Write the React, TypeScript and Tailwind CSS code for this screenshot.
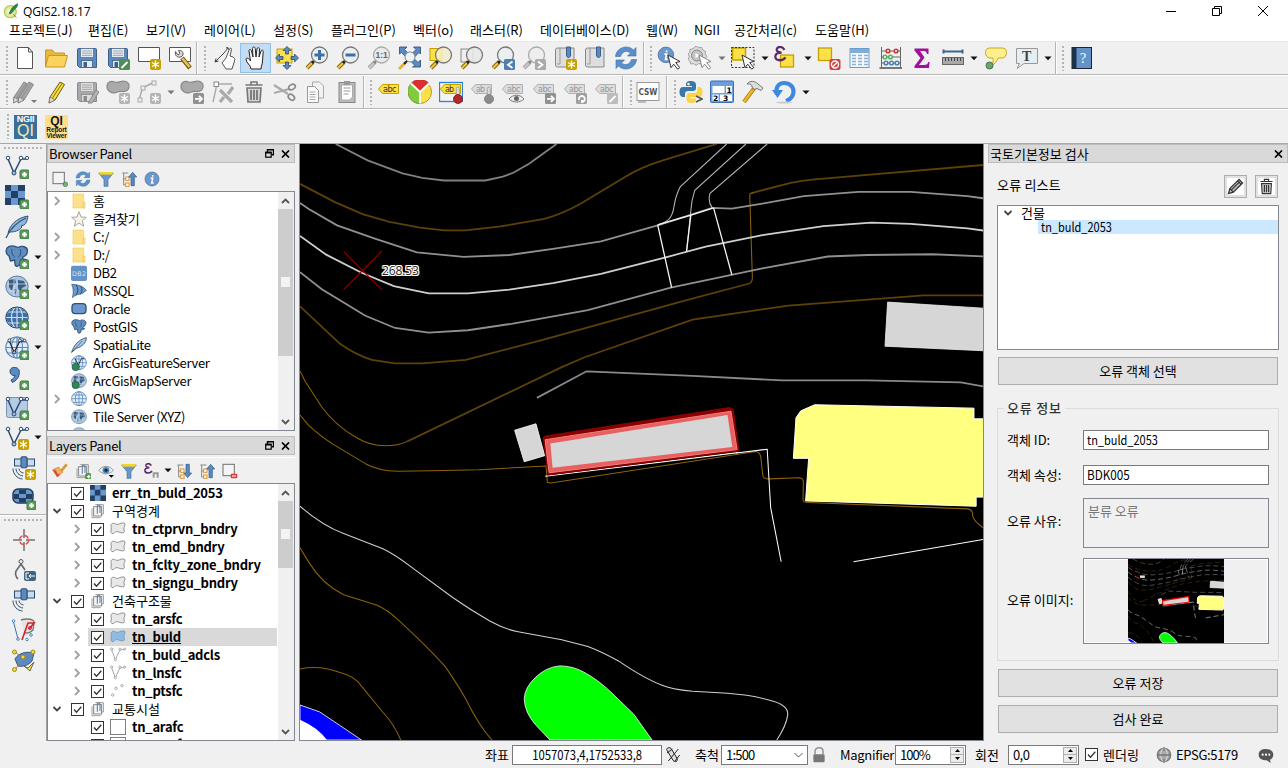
import React from "react";
import type { ReactNode } from "react";

/* ---------- icon primitives ---------- */

function Ico({ children, size = 24, box = 24 }: { children: ReactNode; size?: number; box?: number }) {
  return (
    <svg width={size} height={size} viewBox={`0 0 ${box} ${box}`} fill="none" className="block shrink-0">
      {children}
    </svg>
  );
}

const BLUE = "#5a8ac0";
const NAVY = "#2b4a6f";

const Plus = () => (
  <g>
    <rect x="15" y="15" width="9" height="9" rx="1.5" fill="#5a9a5a" stroke="#3f7a42" />
    <path d="M19.5 17v5M17 19.5h5" stroke="#fff" strokeWidth="2" />
  </g>
);
const Star = ({ c = "#c8a000" }: { c?: string }) => (
  <g>
    <rect x="13" y="13" width="11" height="11" rx="2" fill={c} />
    <path d="M18.500 14.500v8M15 16.500l7 4M22 16.500l-7 4" stroke="#fff" strokeWidth="1.400" />
  </g>
);
const Badge = ({ d, c = "#8c8c8c" }: { d: string; c?: string }) => (
  <g>
    <rect x="13" y="13" width="11" height="11" rx="1.500" fill={c} />
    <path d={d} stroke="#fff" strokeWidth="1.8" />
  </g>
);
const ARROW = "M15 18.8h7M19 15.8l3 3-3 3";
const Cursor = ({ c = "#333" }: { c?: string }) => (
  <path d="M11 9l12 6.5-4.3 1.1 4 5-2 1.6-4-5-2.7 3.5z" fill="#fff" stroke={c} />
);
const Lens = ({ grey = false, children, fill = "#e9eef0" }: { grey?: boolean; children?: ReactNode; fill?: string }) => (
  <g>
    <path d="M2 22l6-6" stroke={grey ? "#a8a8a8" : "#8a6a10"} strokeWidth="4" />
    <path d="M2 22l5-5" stroke={grey ? "#c9c9c9" : "#f5c53a"} strokeWidth="2" />
    <path d="M7 17l3-3" stroke={grey ? "#888" : "#222"} strokeWidth="2.5" />
    <circle cx="14.5" cy="9" r="8" fill={fill} fillOpacity=".85" stroke={grey ? "#aaa" : "#777"} strokeWidth="1.3" />
    {children}
  </g>
);
const Floppy = ({ a = "#5a8ac0", b = "#3e5f86", l = "#e4eaf0" }: { a?: string; b?: string; l?: string }) => (
  <g>
    <path d="M2.5 3.5a1 1 0 011-1h17a1 1 0 011 1v18h-17l-2-2z" fill={a} stroke={b} />
    <rect x="5.5" y="2.5" width="13" height="9" fill={l} stroke={b} strokeWidth=".6" />
    <path d="M7 5h10M7 7.2h10M7 9.4h10" stroke="#999" strokeWidth=".8" />
    <rect x="6.5" y="14.5" width="11" height="7" fill={l} stroke={b} strokeWidth=".8" />
    <rect x="8.5" y="16" width="3.5" height="5" fill={b} />
  </g>
);
const Blob = ({ f = "#c4c4c4", s = "#8f8f8f" }: { f?: string; s?: string }) => (
  <path d="M1 6.500C1 2 5 .5 8.500 2s5-.8 9-.8 6 2.300 5.500 5.800-3 5-7 4.500-4 .8-7 1.300S1 11.500 1 6.500z" fill={f} stroke={s} strokeWidth="1.2" />
);
const TagShape = ({ grey = false, text = "abc" }: { grey?: boolean; text?: string }) => (
  <g>
    <path d="M1.500 9L5.500 4.500h16v9h-16z" fill={grey ? "#dcdcdc" : "#fbe04a"} stroke={grey ? "#b0b0b0" : "#c4a000"} strokeLinejoin="round" />
    <text x="6" y="12" fontSize="8" fontFamily="DejaVu Sans, sans-serif" fill={grey ? "#999" : "#333"} textLength={text.length > 2 ? 13.5 : 9}>{text}</text>
  </g>
);
const Pin = ({ c, d }: { c: string; d: string }) => (
  <g>
    <path d="M17.300 16V8.500a1.500 1.500 0 013 0V16" fill="#ddd" stroke="#999" strokeWidth=".8" />
    <circle cx="19" cy="19" r="4.500" fill={c} stroke={d} strokeWidth=".8" />
  </g>
);
const VNodes = ({ c = NAVY }: { c?: string }) => (
  <g stroke={c}>
    <path d="M3 4l6 14L16 4h5" stroke={c} strokeWidth="1.5" />
    <circle cx="3" cy="3" r="1.800" fill="#fff" />
    <circle cx="16" cy="3" r="1.800" fill="#fff" />
    <circle cx="22" cy="3" r="1.600" fill="#fff" />
    <circle cx="9" cy="18" r="2" fill="#9dbede" />
  </g>
);
const Globe = ({ f = "#e3edf7", s = "#5a8ac0" }: { f?: string; s?: string }) => (
  <g stroke={s} strokeWidth="1.200">
    <ellipse cx="12" cy="11.500" rx="11.200" ry="10.500" fill={f} />
    <ellipse cx="12" cy="11.500" rx="5.500" ry="10.500" />
    <path d="M12 1v21M1 11.500h22M3 6h18M3 17h18" />
  </g>
);
const Land = () => (
  <g>
    <ellipse cx="12" cy="11.500" rx="11.200" ry="10.500" fill="#a9c4e0" stroke="#5f7f9f" />
    <path d="M4 5l6-1 1 4-3 3-1 5-3-4zM13 5l6 1 2 5-4 2-2 5-2-5zM9 14l3 1-2 5z" fill="#3b5c80" />
    <path d="M2 9h20M4 16h16M9 2v19" stroke="#dce8f3" strokeWidth=".7" />
  </g>
);
const Elephant = () => (
  <g>
    <path d="M2 3c3-3 8-2 11-.5 4-2 9-1 9.500 3 0 4-3 6-4.500 6.500l-.5 2 3 .5-3 1.500-2-1-.5 4c-1 3-5 3-5 0l-.5-4-4 1-1.500-5C1 9 .5 6 2 3z" fill="#5f8dbf" stroke="#2e4f78" strokeWidth="1.300" />
    <path d="M7 4c-1 4 1 7 3 8M15 4c2 4 0 7-2 8" stroke="#2e4f78" />
  </g>
);
const Feather = () => (
  <g>
    <path d="M3 19C4 11 11 3 23 1c-1 4-1 7-4 9l-3 1 1 1c-3 4-8 5-12 5z" fill="#8fb4da" stroke="#33557c" />
    <path d="M1 23C5 14 12 7 21 3" stroke="#33557c" strokeWidth="1.300" />
  </g>
);
const Checker = () => (
  <g>
    <rect width="20" height="20" fill="#6b98cc" />
    <path d="M0 0h6v6H0zM13 0h7v6h-7zM6 6h7v7H6zM0 13h6v7H0zM13 13h7v7h-7z" fill="#223f66" />
  </g>
);
const Refresh = () => (
  <g fill="#5a8fcc" stroke="#3c6ea8" strokeWidth=".6">
    <path d="M1.500 10.500C2 4.500 7 1 12 1c3 0 5.500 1 7.500 3L22 1.500V10h-8.500l3-3c-3-2.500-8-2.500-10 3.500z" />
    <path d="M22.500 13.500C22 19.500 17 23 12 23c-3 0-5.500-1-7.500-3L2 22.500V14h8.500l-3 3c3 2.500 8 2.500 10-3.500z" />
  </g>
);
const Funnel = () => (
  <g>
    <path d="M1 3h22l-8 10v10h-6V13z" fill="#6b98cc" stroke="#456f9f" />
    <path d="M2 3.500h20" stroke="#f4d62b" strokeWidth="4" />
  </g>
);
const Info = () => (
  <g>
    <circle cx="12" cy="12" r="10.500" fill="#6b98cc" stroke="#44699a" />
    <path d="M13 6v2.500M10 11h3l-1.500 7h3" stroke="#fff" strokeWidth="2.200" />
  </g>
);
const TreeArrow = ({ up = true }: { up?: boolean }) => (
  <g>
    <path d="M2 3h9M4 3v18h5M4 12h5" stroke="#888" strokeWidth="1.500" />
    <rect x="7" y="9" width="5" height="5" fill="#fff" stroke="#e0902a" strokeWidth="1.500" />
    <rect x="7" y="18" width="5" height="5" fill="#fff" stroke="#e0902a" strokeWidth="1.500" />
    <path d={up ? "M17.500 2l6 7h-3.500v13h-5V9h-3.500z" : "M17.500 22l6-7h-3.500V2h-5v13h-3.500z"} fill="#5a8ac0" stroke="#2e5484" />
  </g>
);
const Epsilon = ({ c = "#5a2a6a" }: { c?: string }) => (
  <path d="M11 4C8-1 2 1 3 4.500 3.500 6 5 6.800 8 7 3 7 1 9 1.500 12c.8 4 8 4 10.500 0" stroke={c} strokeWidth="2.400" />
);
const Satellite = () => (
  <g>
    <rect x="2.500" y="3" width="7" height="7" fill="#c6dbef" stroke={NAVY} />
    <rect x="15" y="3" width="7.500" height="7" fill="#c6dbef" stroke={NAVY} />
    <rect x="9" y=".8" width="6" height="11" rx="1" fill="#5a8ac0" stroke={NAVY} />
    <path d="M4 12.500c0 4 3 7 7 7.500M7 12.500c0 2.500 2 4 4.500 4.500M1 12.500c0 5.500 4 10 9.500 10.500" stroke={NAVY} />
  </g>
);
const Pencil = ({ f = "#f5dc3c", s = "#6b5a10" }: { f?: string; s?: string }) => (
  <g>
    <path d="M6 17L16 2l4.500 2.500L11 20l-6 3z" fill={f} stroke={s} />
    <path d="M8.500 18L18 3.500" stroke={s} strokeWidth=".8" />
    <path d="M6 17l-1 6 6-3z" fill="#ddd" stroke="#777" strokeWidth=".8" />
  </g>
);
const TrashCan = ({ c = "#777" }: { c?: string }) => (
  <g stroke={c} strokeWidth="1.600">
    <path d="M3.500 5h17M9 4.500V2h6v2.500" />
    <path d="M5 8h14l-1 14H6z" fill="#d5d5d5" />
    <path d="M9 10v10M12 10v10M15 10v10" strokeWidth="1.800" />
  </g>
);
const Page = () => <path d="M4.500 1.500h11l4 4.500v16.500h-15zM15.500 1.500V6h4" fill="#fff" stroke="#555" />;
const Composer = () => <path d="M1.500 1.500h21v14h-21z" fill="#fff" stroke="#555" />;
const Book = () => (
  <g>
    <path d="M2.500 4a2 2 0 012-2H21v19H4.500a2 2 0 01-2-2z" fill="#dedede" stroke="#888" />
    <path d="M7 2v16H4" stroke="#999" />
    <path d="M13.500 1h4v9l-2 2-2-2z" fill="#5a8ac0" stroke="#3c5f8a" />
  </g>
);

/* ---------- toolbar pieces ---------- */

function Handle() {
  return (
    <div className="flex w-[13px] shrink-0 justify-center">
      <div className="h-[25px] w-[2px] bg-[repeating-linear-gradient(to_bottom,#b4b4b4_0px,#b4b4b4_2px,transparent_2px,transparent_4px)]" />
    </div>
  );
}
function Sep() {
  return <div className="h-full w-[2px] shrink-0 border-r border-white bg-[#b4b4b4]" />;
}
function B({ children, on = false }: { children: ReactNode; on?: boolean }) {
  return (
    <div className={on ? "flex h-[30px] w-[30.9px] shrink-0 items-center justify-center border border-[#90c0ea] bg-[#c3dcf2]" : "flex h-[30px] w-[30.9px] shrink-0 items-center justify-center"}>
      <Ico>{children}</Ico>
    </div>
  );
}
function Drop({ grey = false }: { grey?: boolean }) {
  return (
    <div className="flex w-[12.2px] shrink-0 justify-center">
      <svg width="8" height="5" viewBox="0 0 8 5"><path d="M.5 .5h7L4 4.300z" fill={grey ? "#777" : "#111"} /></svg>
    </div>
  );
}

function RowOne() {
  return (
    <div className="flex h-[34px] items-center border-b border-[#b8b8b8] border-t border-t-[#e8e8e8]">
      <div className="-mr-[3px]"><Handle /></div>
      <B><Page /></B>
      <B>
        <path d="M1.500 21V4h7l2 3h10v3" fill="#e8b93a" stroke="#c9962a" />
        <path d="M1.500 21L4.500 9.500h19L20.500 21z" fill="#fbd35c" stroke="#c9962a" />
      </B>
      <B><Floppy /></B>
      <B>
        <Floppy />
        <Badge c="#4e8f57" d="M15.500 22l6-6" />
      </B>
      <B><Composer /><Star /></B>
      <B>
        <Composer />
        <path d="M14 12l8 10" stroke="#7a5a10" strokeWidth="4.500" />
        <path d="M14.500 12.500l7 8.500" stroke="#e8c35a" strokeWidth="2.500" />
        <path d="M7.500 5.500c-1 4 2 6.500 5.500 5.500l2-2c.5-3-1.500-5-4.500-4.500l1.500 3-2 1.500z" fill="#ddd" stroke="#555" />
      </B>
      <div className="ml-px h-full"><Sep /></div>
      <div className="-mr-[2px]"><Handle /></div>
      <B>
        <path d="M9 17l4-5 3.500-9c.6-1.500 2.300-1 2 .6L17 10l3 1c1.500 1 2 2 1.500 4L19 23h-6z" fill="#fff" stroke="#555" />
        <path d="M2 16L11 7M2 16l1-3.500M2 16l3.500-1M11 7l4-5M13 2l2-.5.5 2" stroke="#444" />
      </B>
      <B on>
        <path d="M7 23c0-4-5-6-5-10 1-2 3-.5 4.500 2L5 5c0-2 2-2 2.500 0L9 11 8.500 2.500c0-2 2.500-2 2.700 0L12 11l1-8c.2-2 2.500-1.500 2.500 0L15 11l2-6c.8-1.500 2.500-1 2.200.8L18.500 15c0 3-1.500 5-1.500 8z" fill="#fff" stroke="#222" />
      </B>
      <B>
        <rect x="2" y="3" width="15" height="14" fill="#fbe04a" stroke="#c4a000" />
        <path d="M12 .5l4 4h-2.500v3.500h-3V4.500H8zM12 23.500l4-4h-2.500V16h-3v3.500H8zM.5 12l4-4v2.500H8v3H4.500V16zM23.500 12l-4-4v2.500H16v3h3.500V16z" fill={BLUE} stroke="#2b4a73" strokeWidth=".8" />
      </B>
      <B><Lens><path d="M14.500 4v10M9.500 9h10" stroke="#3c6fa8" strokeWidth="3" /></Lens></B>
      <B><Lens><path d="M9.500 9h10" stroke="#3c6fa8" strokeWidth="3" /></Lens></B>
      <B><Lens grey fill="#e8e8e8"><text x="8.500" y="12" fontSize="8.500" fontWeight="700" fontFamily="Liberation Sans, sans-serif" fill="#666">1:1</text></Lens></B>
      <B>
        <path d="M2 1h7L6.500 3.500l4 4-3 3-4-4L1.500 8V1zM22.500 1h-7L18 3.500l-4 4 3 3 4-4L22.500 8zM22.500 21v-7L20 16.500l-4-4-3 3 4 4-2.500 1.500z" fill={BLUE} stroke="#2b4a73" strokeWidth=".8" />
        <circle cx="12" cy="11" r="5" fill="#eef3f6" stroke="#888" />
        <path d="M1 23l7-7" stroke="#e8b52c" strokeWidth="3" />
        <path d="M6 18l3-3" stroke="#222" strokeWidth="2" />
      </B>
      <B><rect x="1" y="2.500" width="12" height="12" fill="#fbe04a" stroke="#c4a000" /><Lens fill="#f3ecc8" /></B>
      <B><rect x="1" y="3" width="12" height="13" fill="#eee" stroke="#888" /><Lens fill="#e8e9e6" /></B>
      <B><Lens /><Badge c="#4f7fb0" d="M21.500 15.500l-4.500 3.300 4.500 3.300" /></B>
      <B><Lens grey fill="#ededed" /><Badge c="#aaaaaa" d="M16 15.500l4.500 3.300-4.500 3.300" /></B>
      <B><Book /><Star /></B>
      <B><Book /></B>
      <B><Refresh /></B>
      <div className="ml-px h-full"><Sep /></div>
      <div className="-mr-[4px]"><Handle /></div>
      <B><g transform="scale(.74)"><Info /></g><Cursor /></B>
      <B>
        <path d="M9 0l3 2 3-.5 1.500 3 3 1.500-.500 3 2 2.500-2 2.500.5 3-3 1.500L15 20l-3-.5-3 2-3-2-3 .5-1-3-2-2 1.500-3L0 9l2-2 0-3 3.500-1z" transform="scale(.9)" fill="#ddd" stroke="#999" />
        <circle cx="9" cy="9.500" r="5.500" fill="#c4c4c4" stroke="#888" /><path d="M7.500 7l4 2.500-4 2.500z" fill="#fff" /><Cursor c="#888" />
      </B>
      <Drop grey />
      <B><rect x="1.500" y="2" width="13" height="12" fill="#fbe04a" stroke="#c4a000" strokeWidth="1.500" /><path d="M.5 1.500h22.500v20H.5z" stroke="#333" strokeDasharray="2 1.500" /><Cursor /></B>
      <Drop />
      <B><rect x="6.500" y="9" width="13" height="12" fill="#fbe04a" stroke="#c4a000" strokeWidth="1.300" /><g transform="scale(.95)"><Epsilon /></g></B>
      <Drop />
      <B>
        <rect x="1.500" y="2" width="13" height="12.500" fill="#fbe04a" stroke="#c4a000" strokeWidth="1.300" />
        <rect x="12.500" y="13" width="11" height="11" rx="2" fill="#d3403c" />
        <circle cx="18" cy="18.500" r="3.500" stroke="#fff" strokeWidth="1.400" /><path d="M15.500 21l5-5" stroke="#fff" strokeWidth="1.400" />
      </B>
      <B>
        <rect x="2" y="2.500" width="19" height="19" fill="#f4f8fc" stroke="#6c9ccc" />
        <path d="M2 3h19v4H2z" fill="#7fadd8" />
        <path d="M4 9.500h4M10 9.500h4M16 9.500h4M4 12.500h4M10 12.500h4M16 12.500h4M4 15.500h4M10 15.500h4M16 15.500h4M4 18.500h4M10 18.500h4M16 18.500h4" stroke="#8ab0d4" strokeWidth="1.400" />
      </B>
      <B>
        <path d="M2.500 1v20M21.500 1v20M2 5h20M2 11h20M2 17h20" stroke="#666" />
        <path d="M.5 21h22.500v2H.5z" fill="#777" />
        <g fill="#fff" strokeWidth="1.600"><g stroke="#cc3a3a"><circle cx="9" cy="5" r="1.800" /><circle cx="17" cy="5" r="1.800" /></g><g stroke="#5cae5c"><circle cx="6" cy="11" r="1.800" /><circle cx="11.500" cy="11" r="1.800" /></g><g stroke="#4c80b8"><circle cx="7" cy="17" r="1.800" /><circle cx="12.500" cy="17" r="1.800" /><circle cx="18" cy="17" r="1.800" /></g></g>
      </B>
      <B><path d="M4.500 2.500h14v5.500h-1.500C16.500 6 16 5 13.500 5H10l4.500 6.500L9 19h5c3 0 4-1 4-3h1.500l-.5 6H4.500v-2l6-8-6-7.500z" fill="#a0109a" /></B>
      <B>
        <path d="M2.500 5.500h19M2.500 3.500v4M21.500 3.500v4" stroke="#3c648f" strokeWidth="2" />
        <rect x="1.500" y="11.500" width="21" height="7" fill="#a9a9a9" stroke="#666" /><path d="M4.500 12v3M7.500 12v3M10.500 12v3M13.500 12v3M16.500 12v3M19.500 12v3" stroke="#444" />
      </B>
      <Drop />
      <B>
        <path d="M6 2h12c3 0 4.500 1.500 4.500 4.500s-1.500 5.500-4.500 5.500h-4c-1 3.500-4 6.500-6 7.500 1-2 1.500-4.500 1-7.500H6C3 12 1.500 9.500 1.500 6.500S3 2 6 2z" fill="#fcf08c" stroke="#c9a820" />
        <circle cx="5.500" cy="19.500" r="3.500" fill="#6ea36e" stroke="#44774a" />
      </B>
      <B>
        <path d="M1.500 2.500h21v15H9l-7 5 2.500-5h-3z" fill="#e6eef4" stroke="#999" />
        <text x="7" y="14.500" fontSize="14" fontWeight="700" fontFamily="Liberation Serif, serif" fill="#444">T</text>
      </B>
      <Drop />
      <Sep />
      <div className="-mr-[3px]"><Handle /></div>
      <B>
        <rect x="2" y="1.500" width="19.500" height="21" fill="#6492c6" stroke="#223" /><path d="M2 1.500h4.500v21H2z" fill="#1d3048" />
        <text x="10" y="17" fontSize="14" fontFamily="Liberation Serif, serif" fill="#fff">?</text>
      </B>
    </div>
  );
}

function RowTwo() {
  return (
    <div className="flex h-[34px] items-center border-b border-[#b8b8b8] border-t border-t-white">
      <div className="-mr-[3px]"><Handle /></div>
      <B>
        <g transform="translate(-5 0)"><Pencil f="#a6a6a6" s="#888" /></g><g transform="translate(0 0)"><Pencil f="#a6a6a6" s="#888" /></g>
        <path d="M18 20h6l-3 3z" fill="#777" />
      </B>
      <B><Pencil /></B>
      <B><Floppy a="#a9a9a9" b="#8a8a8a" l="#dedede" /><path d="M13 23l8-13 3 2-7 11z" fill="#b4b4b4" stroke="#888" /></B>
      <B><Blob f="#aaa" s="#888" /><Star c="#b4b4b4" /></B>
      <B><path d="M3 20C3 10 7 6 16 3" stroke="#aaa" strokeWidth="1.500" /><g fill="#eee" stroke="#aaa"><rect x="1" y="18" width="4" height="4" /><rect x="4" y="6" width="4" height="4" /><rect x="15" y="1" width="4" height="4" /></g><Star c="#b4b4b4" /></B>
      <Drop grey />
      <B><Blob f="#aaa" s="#888" /><Badge c="#909090" d={ARROW} /></B>
      <B>
        <path d="M2 22L6 4h15" stroke="#aaa" strokeWidth="1.400" /><rect x="3" y="2" width="4.500" height="4.500" fill="#fff" stroke="#888" />
        <path d="M9 10l12 12M9 22l4-5M17 14l5-7" stroke="#aaa" strokeWidth="3.200" />
      </B>
      <B><TrashCan /></B>
      <B>
        <path d="M1 5l14 9M1 13l15-4" stroke="#aaa" strokeWidth="2.200" /><ellipse cx="19" cy="7" rx="3.500" ry="2.500" transform="rotate(-30 19 7)" stroke="#888" strokeWidth="1.600" /><ellipse cx="18.500" cy="17" rx="3.500" ry="2.500" transform="rotate(40 18 17)" stroke="#888" strokeWidth="1.600" />
      </B>
      <B>
        <path d="M8.500 2h7l4 4v12h-11z" fill="#f2f2f2" stroke="#aaa" /><path d="M3.500 6.500h7l4 4v12h-11z" fill="#fafafa" stroke="#999" /><path d="M5.500 12h6M5.500 14.500h6M5.500 17h6M5.500 19.500h6" stroke="#aaa" />
      </B>
      <B>
        <rect x="4" y="2.500" width="16" height="20" fill="#bbb" stroke="#888" /><path d="M6.500 5h11v12l-3 3h-8z" fill="#fff" stroke="#aaa" /><rect x="9" y="1" width="6" height="4" fill="#999" /><path d="M8.500 8h7M8.500 11h7M8.500 14h5" stroke="#999" />
      </B>
      <div className="ml-px h-full"><Sep /></div>
      <div className="-mr-[4px]"><Handle /></div>
      <B><TagShape /></B>
      <B>
        <circle cx="12" cy="12" r="11.500" fill="#fbe04a" stroke="#b59a20" />
        <path d="M12 12L3 3.500a12 12 0 0118 0z" fill="#dd2f2f" stroke="#a22" strokeWidth=".6" /><path d="M12 12L3 3.500A12 12 0 0012 23.500z" fill="#80cc3c" stroke="#4c8a20" strokeWidth=".6" />
        <path d="M12 23.500V12L3 3.500M12 12l9-8.500" stroke="#fff" strokeWidth="1.800" />
      </B>
      <B><rect x=".5" y="2.500" width="23" height="19" fill="#f4f4f4" stroke="#2f7fdc" strokeWidth="1.300" /><TagShape text="ab" /><Pin c="#b02a2a" d="#7c1414" /></B>
      <B><TagShape grey text="ab" /><Pin c="#8c8c8c" d="#777" /></B>
      <B><TagShape grey /><path d="M8 19c4-5 11-5 15 0-4 4-11 4-15 0z" fill="#eee" stroke="#777" /><circle cx="15.500" cy="18.500" r="2.500" fill="#666" /></B>
      <B><TagShape grey /><Badge c="#909090" d={ARROW} /></B>
      <B><TagShape grey /><Badge c="#a0a0a0" d="M16 20a3 3 0 113 2v-2" /></B>
      <B><TagShape grey /><Badge c="#bcbcbc" d="M15.500 22l6-6" /></B>
      <div className="ml-px h-full"><Sep /></div>
      <div className="-mr-[3px]"><Handle /></div>
      <div className="-ml-[2px] flex"><B><rect x="1" y="2.500" width="22" height="18" fill="#fff" stroke="#999" /><text x="2.500" y="15" fontSize="9" fontWeight="700" fontFamily="DejaVu Sans, sans-serif" fill="#555" textLength="19" lengthAdjust="spacingAndGlyphs">CSW</text><path d="M2 22h8" stroke="#888" /></B></div>
      <div className="ml-[3px] h-full"><Sep /></div>
      <div className="-mr-[5px]"><Handle /></div>
      <B>
        <path d="M12 1c-5 0-5 2-5 5h6v1H4c-3 0-3.500 3-3.500 5.500S2 17 4 17h2v-3c0-2 1-3 3-3h5c2 0 3-1 3-3V5c0-3-2-4-5-4z" fill="#3a78ac" />
        <path d="M12 23c5 0 5-2 5-4.500h-5.500V17H20c3 0 3.500-3 3.500-5.500S22 7 20 7h-1.500v3c0 2-1 3-3 3h-5c-2 0-3 1-3 3v3c0 3 2 4 4.500 4z" fill="#fbd343" /><circle cx="9.500" cy="4" r="1.200" fill="#fff" /><path d="M17 16l6 3-6 3" stroke="#555" strokeWidth="1.600" />
      </B>
      <B>
        <rect x=".5" y="1" width="23" height="21.500" rx="1" fill="#6b9fe0" stroke="#3f6fb8" /><rect x="2.500" y="6" width="12" height="7" fill="#fff" /><rect x="16" y="6" width="6" height="7" fill="#fff" /><rect x="2.500" y="14.500" width="6" height="6.500" fill="#fff" /><rect x="10" y="14.500" width="12" height="6.500" fill="#fff" />
        <g fontSize="7.500" fontWeight="700" fontFamily="DejaVu Sans, sans-serif" fill="#000"><text x="16.500" y="12.500">1</text><text x="3" y="20.500">2</text><text x="13" y="20.500">3</text></g>
      </B>
      <B>
        <path d="M3 22L14 7" stroke="#a87a10" strokeWidth="4" /><path d="M3 22L12 9.500" stroke="#f0b428" strokeWidth="2.600" /><path d="M6 4c3-4 8-3 11 0l5 4-2 2.500-4-2-3 1-2-2.500c0-3-2-3-5-3z" fill="#ddd" stroke="#777" />
      </B>
      <B>
        <path d="M5 14C3 7 7 3 12 3c6 0 9.500 4 9.500 8.500 0 5-3.500 8-7.500 9.500" stroke="#3f88e0" strokeWidth="4.200" /><path d="M0 10l11 0-5.500 8z" fill="#3f88e0" /><ellipse cx="12" cy="22.500" rx="8" ry="1" fill="#ccc" />
      </B>
      <Drop />
    </div>
  );
}

function RowThree() {
  return (
    <div className="flex h-[35px] shrink-0 items-center border-b border-[#a8a8ac] border-t border-t-white pl-px">
      <Handle />
      <div className="flex h-6 w-[23px] flex-col items-center justify-center bg-[#3a6f9c] font-['Liberation_Sans',sans-serif]">
        <span className="text-[9px] leading-[9px] font-bold tracking-[-0.2px] text-white">NGII</span>
        <span className="text-[16px] leading-[14px] text-[#f6ecb0]">QI</span>
      </div>
      <div className="ml-2 flex h-6 w-[23px] flex-col items-center justify-center bg-[#fddf88] font-['Liberation_Sans',sans-serif] font-bold text-[#10142c]">
        <span className="text-[12px] leading-[12px]">QI</span>
        <span className="text-[6.5px] leading-[6px] tracking-[-0.1px]">Report</span>
        <span className="text-[6.5px] leading-[6px] tracking-[-0.1px]">Viewer</span>
      </div>
    </div>
  );
}

/* ---------- left vertical toolbar ---------- */

function V({ children, drop = false, mid = false }: { children: ReactNode; drop?: boolean; mid?: boolean }) {
  return (
    <div className={mid ? "flex h-[30.1px] shrink-0 items-center pl-[12px]" : "flex h-[30.1px] shrink-0 items-center pl-[5px]"}>
      <Ico>{children}</Ico>
      {drop && <div className="ml-[3px]"><Drop /></div>}
    </div>
  );
}
function SideBar() {
  const dots = "mx-1 h-[2px] shrink-0 bg-[repeating-linear-gradient(to_right,#b4b4b4_0px,#b4b4b4_2px,transparent_2px,transparent_4px)]";
  return (
    <div className="flex w-[47px] shrink-0 flex-col border-r border-[#a0a0a0]">
      <div className={dots + " mt-[3px] mb-[3px]"} />
      <V><VNodes /><Plus /></V>
      <V><Checker /><Plus /></V>
      <V><Feather /><Plus /></V>
      <V drop><Elephant /><Plus /></V>
      <V drop><Land /><Plus /></V>
      <V><Globe f="#3e6ea6" s="#cfe0f0" /><ellipse cx="12" cy="11.500" rx="11.200" ry="10.500" stroke="#1f3d63" /><Plus /></V>
      <V drop><Globe /><g transform="translate(2 2) scale(.8)"><VNodes c="#222" /></g><Plus /></V>
      <V><path d="M5 5c0-3 3-4 5.500-3.500C14 2 15 5 14 9c-.8 3-3 6-6.500 7.500L6 14c2-1 3.500-2.500 4-4.500C7 10 5 8 5 5z" fill={BLUE} stroke="#2e4f78" /><Plus /></V>
      <V><rect x="1.500" y="1.500" width="21" height="20" rx="2" fill="#b5cce4" stroke="#7d93aa" /><VNodes /><Plus /></V>
      <V drop><VNodes /><Star /></V>
      <V mid><Satellite /><Star /></V>
      <V mid><rect x="1" y="3" width="20" height="14" rx="5" fill="#6b98cc" stroke="#223a5c" strokeWidth="1.500" /><path d="M7 4h7v4H7zM2 8h5v5H2zM14 8h6v5h-6zM7 12h7v4H7z" fill="#223f66" /><Plus /></V>
      <div className="mt-[1px] h-[2px] shrink-0 border-b border-white bg-[#b4b4b4]" />
      <div className={dots + " mt-[3px] mb-[4px]"} />
      <V mid><path d="M12 1v9M12 14v9M1 12h9M14 12h9" stroke="#333" /><circle cx="12" cy="12" r="4.500" stroke="#e05050" strokeWidth="1.400" strokeDasharray="5 2" /></V>
      <V mid><circle cx="9" cy="3.500" r="2" stroke="#555" /><path d="M9 6L4 13c-1 3 0 6 2 8M9 6l4 6" stroke="#666" strokeWidth="1.600" /><rect x="12" y="13" width="12" height="10" rx="2" fill="#3e6684" /><path d="M17 15h-3v6h3M23 18h-6l2-2M17 18l2 2" stroke="#fff" /></V>
      <V mid><Satellite /></V>
      <V mid><path d="M1 2l5 19" stroke="#3f70a8" /><path d="M9 2c5-2 14-1 13 3l-1 7c-3 3-6 4-9 2" stroke="#777" strokeWidth="1.400" fill="#e4e4e4" /><path d="M10 22l6-17h6l-5 6" stroke="#e02020" strokeWidth="1.600" /><circle cx="18" cy="10" r="1.500" stroke="#e02020" /><g fill="#fff" stroke="#3f80c8"><circle cx="1.500" cy="3" r="1.300" /><circle cx="6" cy="21" r="1.300" /><circle cx="15" cy="21.500" r="1.300" /><circle cx="19" cy="17" r="1.300" /></g></V>
      <V mid><path d="M3 10c3-6 12-8 19-6l-2 8c-3 4-9 6-14 5z" fill="#5a8ac0" stroke="#3a5a80" /><path d="M3 3l8 6 10-6M3 21l8-12" stroke="#888" /><g fill="#f5dc3c" stroke="#a08a20"><circle cx="2.500" cy="3" r="2" /><circle cx="21" cy="3" r="2" /><circle cx="11" cy="8" r="2" /><circle cx="2.500" cy="20.500" r="2" /></g><path d="M12 17l4 2 6-6-4 9z" fill="#f5dc3c" stroke="#666" /></V>
    </div>
  );
}

/* ---------- docks ---------- */

function DockTitle({ children, float = true }: { children: ReactNode; float?: boolean }) {
  return (
    <div className="flex h-[19px] shrink-0 items-center border border-[#bdbdbd] bg-[#d9d9d9] pl-[1px] whitespace-nowrap">
      <span className={float ? "flex-1 tracking-[-0.3px]" : "flex-1"}>{children}</span>
      {float && (
        <svg width="9" height="9" viewBox="0 0 9 9" fill="none" className="mr-[7px]"><path d="M2.500 3V.8h6v5H6.500" stroke="#000" strokeWidth="1.400" /><rect x=".7" y="3.200" width="5.500" height="5" fill="#d9d9d9" stroke="#000" strokeWidth="1.200" /><path d="M.5 3.700h6" stroke="#000" strokeWidth="1.600" /></svg>
      )}
      <svg width="9" height="8" viewBox="0 0 9 8" fill="none" className="mr-[4px]"><path d="M1 .5l7 7M8 .5l-7 7" stroke="#000" strokeWidth="1.700" /></svg>
    </div>
  );
}
function Chev({ open = false }: { open?: boolean }) {
  return (
    <svg width="10" height="10" viewBox="0 0 10 10" fill="none" className="shrink-0"><path d={open ? "M1.500 3L5 6.500 8.500 3" : "M3 1l4 4-4 4"} stroke={open ? "#444" : "#a0a0a0"} strokeWidth="1.800" /></svg>
  );
}
function Scroll({ top, h, mark }: { top: string; h: string; mark: string }) {
  return (
    <div className="flex w-[16px] shrink-0 flex-col bg-[#f0f0f0] pr-px">
      <div className={"flex items-center justify-center " + top}><svg width="9" height="6" viewBox="0 0 9 6" fill="none"><path d="M1 5l3.500-3.500L8 5" stroke="#555" strokeWidth="1.800" /></svg></div>
      <div className={"flex flex-col items-center bg-[#cdcdcd] " + h}><div className={"h-[10px] w-[9px] bg-[#f3f3f3] " + mark} /></div>
      <div className="flex-1" />
      <div className="flex h-[17px] items-center justify-center"><svg width="9" height="6" viewBox="0 0 9 6" fill="none"><path d="M1 1l3.500 3.500L8 1" stroke="#555" strokeWidth="1.800" /></svg></div>
    </div>
  );
}
const FolderI = () => <><path d="M3 1.500h16v21H3z" fill="#fde08a" stroke="#f0cb5c" /><path d="M18 14h3v8.500h-3z" fill="#fce9a8" stroke="#e6bd4c" /></>;

const SOURCES: { n: string; exp?: boolean; icon: ReactNode }[] = [
  { n: "홈", exp: true, icon: <FolderI /> },
  { n: "즐겨찾기", icon: <path d="M12 1l3 8 8 .5-6 5 2 8.500-7-5-7 5 2-8.500-6-5L9 9z" fill="#f4f4ee" stroke="#a8a890" strokeWidth="1.500" /> },
  { n: "C:/", exp: true, icon: <FolderI /> },
  { n: "D:/", exp: true, icon: <FolderI /> },
  { n: "DB2", icon: <><rect width="24" height="23" y="1" rx="3" fill="#6492c8" /><text x="1.500" y="16" fontSize="9.500" fontFamily="DejaVu Sans, sans-serif" fill="#dbe8f6" textLength="21">DB2</text></> },
  { n: "MSSQL", icon: <><path d="M1 2c9 0 18 3 22 9-3 4-8 6-12 6-3 1-7 3-9 5 2-7 2-13-1-20z" fill="#6b98cc" stroke="#35557c" /><path d="M8 3c3 5 3 10 0 15M15 5c2 4 2 8-1 12" stroke="#28456a" strokeWidth="1.400" /></> },
  { n: "Oracle", icon: <rect x="1.500" y="4" width="21" height="15" rx="5" fill="#6b98cc" stroke="#2e4f78" strokeWidth="2" /> },
  { n: "PostGIS", icon: <Elephant /> },
  { n: "SpatiaLite", icon: <><path d="M1 23C4 13 11 4 23 1c0 8-7 14-15 16z" fill="#a9c6e4" stroke="#33557c" strokeWidth="1.400" /><path d="M1 23L17 6" stroke="#33557c" /></> },
  { n: "ArcGisFeatureServer", icon: <><Globe /><path d="M6 5l5 10 5-10h4" stroke="#333" strokeWidth="1.400" /><circle cx="7" cy="18" r="5.500" fill="#2f8a4a" stroke="#1f4f6a" /></> },
  { n: "ArcGisMapServer", icon: <><Land /><circle cx="7" cy="18" r="5.500" fill="#2f8a4a" stroke="#1f4f6a" /></> },
  { n: "OWS", exp: true, icon: <Globe /> },
  { n: "Tile Server (XYZ)", icon: <Land /> },
  { n: "WCS", icon: <Land /> },
];

function BrowserPanel() {
  return (
    <div className="flex h-[287px] shrink-0 flex-col">
      <DockTitle>Browser Panel</DockTitle>
      <div className="flex h-[28px] shrink-0 items-center gap-[7px] pt-[3px] pl-[5px]">
        <Ico size={16}><rect x="1.500" y="2" width="17" height="17" fill="#f4f4f4" stroke="#777" strokeWidth="1.600" /><circle cx="20" cy="20" r="3.500" fill="#7cb07c" stroke="#3f7a42" /></Ico>
        <Ico size={16}><Refresh /></Ico>
        <Ico size={16}><Funnel /></Ico>
        <Ico size={16}><TreeArrow /></Ico>
        <Ico size={16}><Info /></Ico>
      </div>
      <div className="flex h-[240px] shrink-0 overflow-hidden border border-[#828790] bg-white">
        <div className="flex flex-1 flex-col overflow-hidden">
          {SOURCES.map((s) => (
            <div key={s.n} className="flex h-[18px] shrink-0 items-center pl-[4px] whitespace-nowrap">
              <div className="mr-[8px] w-[11px]">{s.exp && <Chev />}</div>
              <Ico size={16}>{s.icon}</Ico>
              <span className="ml-[6px] tracking-[-0.35px]">{s.n}</span>
            </div>
          ))}
        </div>
        <Scroll top="h-[17px]" h="h-[147px]" mark="mt-[68px]" />
      </div>
    </div>
  );
}

const Group = () => <><path d="M3 8v14h13" stroke="#999" strokeWidth="1.400" /><rect x="5.500" y="5.500" width="12" height="14" fill="#f4f4f4" stroke="#777" strokeWidth="1.300" /><path d="M8 2.500h12v14h-2.500" stroke="#888" strokeWidth="1.300" /><path d="M11 16V5a2 2 0 014 0v10" stroke="#5a7fa8" strokeWidth="1.600" /></>;
const Poly = ({ f = "#e8e8e6", s = "#8a8a8a" }: { f?: string; s?: string }) => <path d="M2 5c2-3 5-1 8 0s6-3 11-2c3 1 1 4 0 7s2 5 0 7-6 0-10-1-5 4-8 3c-3-2-1-5-1-7s-1-5 0-7z" fill={f} stroke={s} strokeWidth="1.400" />;
const Line = () => <><path d="M2 3l6 16L15 4h7" stroke="#999" strokeWidth="1.300" /><g fill="#fff" stroke="#888"><circle cx="2.500" cy="3" r="1.700" /><circle cx="8" cy="19" r="1.700" /><circle cx="15" cy="3.500" r="1.700" /><circle cx="22" cy="3" r="1.500" /></g></>;
const Points = () => <g fill="#fff" stroke="#888"><circle cx="4" cy="18" r="1.800" /><circle cx="9" cy="8" r="1.800" /><circle cx="18" cy="4" r="1.800" /></g>;
const Square = () => <rect x=".7" y=".7" width="22.600" height="22.600" fill="#fff" stroke="#777" strokeWidth="1.400" />;

const LAYERS: { n: string; lvl: 0 | 1 | 2 | 3; icon: ReactNode; on?: boolean }[] = [
  { n: "err_tn_buld_2053", lvl: 0, icon: <g transform="scale(1.2)"><Checker /></g> },
  { n: "구역경계", lvl: 1, icon: <Group /> },
  { n: "tn_ctprvn_bndry", lvl: 2, icon: <Poly /> },
  { n: "tn_emd_bndry", lvl: 2, icon: <Poly /> },
  { n: "tn_fclty_zone_bndry", lvl: 2, icon: <Poly /> },
  { n: "tn_signgu_bndry", lvl: 2, icon: <Poly /> },
  { n: "건축구조물", lvl: 1, icon: <Group /> },
  { n: "tn_arsfc", lvl: 2, icon: <Poly /> },
  { n: "tn_buld", lvl: 2, icon: <Poly f="#8fbbe0" s="#6d9cc4" />, on: true },
  { n: "tn_buld_adcls", lvl: 2, icon: <Line /> },
  { n: "tn_lnsfc", lvl: 2, icon: <Line /> },
  { n: "tn_ptsfc", lvl: 2, icon: <Points /> },
  { n: "교통시설", lvl: 1, icon: <Group /> },
  { n: "tn_arafc", lvl: 3, icon: <Square /> },
  { n: "tn_arwfc", lvl: 3, icon: <Square /> },
];

function Check() {
  return (
    <svg width="13" height="13" viewBox="0 0 13 13" fill="none" className="shrink-0"><rect x=".5" y=".5" width="12" height="12" fill="#fff" stroke="#333" /><path d="M3 6.500l2.500 2.700L10.300 3.800" stroke="#333" strokeWidth="1.300" /></svg>
  );
}

function LayersPanel() {
  return (
    <div className="flex flex-1 flex-col">
      <div className="mt-[5px]"><DockTitle>Layers Panel</DockTitle></div>
      <div className="mt-[2px] flex h-[26px] shrink-0 items-center gap-[7px] border-t border-white pl-[5px]">
        <Ico size={16}><path d="M22 2l-9 11" stroke="#d89a30" strokeWidth="4" /><path d="M1 10l9-4 6 8-8 7z" fill="#f0b060" stroke="#c87a30" /><path d="M1 10l5 1 2 5 4 1-4 4z" fill="#d84a3a" /></Ico>
        <Ico size={16}><Group /><g transform="translate(1 1)"><Plus /></g></Ico>
        <Ico size={16}><path d="M1 11c6-8 16-8 22 0-6 7-16 7-22 0z" fill="#e8eef2" stroke="#777" /><circle cx="12" cy="11" r="5" fill="#4f84b4" /><circle cx="12" cy="11" r="2.300" fill="#123" /><path d="M16 18h8l-4 4z" fill="#000" /></Ico>
        <Ico size={16}><Funnel /></Ico>
        <Ico size={16}><Epsilon /><path d="M13 14h9v8h-3v-5h-3v5h-3z" fill="#999" /></Ico>
        <div className="-mx-[5px]"><Drop /></div>
        <Ico size={16}><TreeArrow up={false} /></Ico>
        <Ico size={16}><TreeArrow /></Ico>
        <Ico size={16}><rect x="1.500" y="2" width="17" height="17" fill="#f4f4f4" stroke="#777" strokeWidth="1.600" /><rect x="13" y="16" width="10" height="7" rx="2" fill="#e03a3a" /><path d="M15 19.500h6" stroke="#fff" strokeWidth="1.600" /></Ico>
      </div>
      <div className="flex h-[258px] shrink-0 overflow-hidden border border-[#828790] bg-white">
        <div className="flex flex-1 flex-col overflow-hidden pr-px">
          {LAYERS.map((l) => (
            <div key={l.n} className="flex h-[18px] shrink-0 items-center pl-[4px] whitespace-nowrap">
              <div className={l.lvl < 2 ? "w-[19px] shrink-0" : "w-[36px] shrink-0 pl-[20px]"}>
                {l.lvl === 1 && <Chev open />}
                {l.lvl === 2 && <Chev />}
              </div>
              <div className={l.on ? "flex h-full flex-1 items-center bg-[#d9d9d9] pl-[3px]" : l.lvl < 2 ? "flex h-full flex-1 items-center" : "flex h-full flex-1 items-center pl-[3px]"}>
                <Check />
                <div className="ml-[6px]"><Ico size={16}>{l.icon}</Ico></div>
                <span className={l.on ? "ml-[6px] font-bold tracking-[-0.2px] underline" : l.lvl === 1 ? "ml-[6px]" : "ml-[6px] font-bold tracking-[-0.25px]"}>{l.n}</span>
              </div>
            </div>
          ))}
        </div>
        <Scroll top="h-[17px]" h="h-[67px]" mark="mt-[28px]" />
      </div>
    </div>
  );
}

/* ---------- map ---------- */

const W = "#cfcfcf";
const WHITE_2: [string, string][] = [
  ["M82 0L155 43 235 77 280 89 330 96H425L465 86 490 75 525 52 588 0", "#808080"],
  ["M0 155L20 171 85 214 175 250 268 285 375 297 480 292 580 276 690 256 820 214 945 168 990 170 1060 157 1155 137 1280 126H1400L1530 137 1568 143", "#909090"],
  ["M0 242L60 291 140 338 215 374 295 393 385 393 480 383 580 366 690 342 845 296 930 270 1060 240 1200 216 1310 207 1400 210 1530 222 1568 228", W],
  ["M0 337L50 382 150 452 218 484 295 496 385 490 485 473 660 437 850 378 1060 327 1210 296 1300 292 1450 290 1568 296", "#909090"],
  ["M543 668L657 598 900 610 1105 622H1300L1515 627 1568 638", "#8a8a8a"],
];
const WHITE_1 = [
  "M978 0L872 112C850 160 864 175 845 199Q835 208 820 213",
  "M1022 0L905 122Q897 150 896 175L886 284",
  "M1071 0L940 130Q934 150 945 168",
];
const BROWN_2 = [
  "M0 105L80 153 145 185 205 205 275 220 330 227H380L460 217 560 197Q600 185 645 156L745 87Q780 62 830 44L955 0",
  "M0 427L90 524Q125 553 165 568L218 577H280L380 568 550 517 880 413 1030 367",
  "M245 783L600 587Q650 560 700 542L900 462 1120 425 1430 398H1568",
  "M1035 129L1125 102Q1150 96 1180 93L1568 55",
];
const BROWN_1 = [
  "M1030 367Q1037 363 1037 352L1031 133Q1031 129 1040 128",
  "M0 597L12 625 50 692Q80 740 130 773 160 794 195 794 225 794 245 783",
  "M0 713L20 740Q45 767 80 793L150 841Q180 860 225 861L330 859 410 857 564 847 567 890 575 892 1045 809 Q1056 810 1057 830L1061 872Q1062 881 1075 881L1145 878Q1154 879 1154 890L1153 935Q1153 943 1165 943L1530 960Q1540 961 1542 972 1540 980 1550 994L1568 1012",
  "M0 1062L20 1100Q50 1157 100 1186L175 1213Q200 1225 225 1252 290 1320 333 1375 360 1420 380 1460 410 1530 440 1568",
  "M0 1381Q45 1370 90 1390 125 1400 140 1425L190 1495Q215 1525 231 1568",
];

function MapDrawing({ small = false }: { small?: boolean }) {
  const ns = { vectorEffect: "non-scaling-stroke" as const };
  const thick = small ? 0.5 : 1.8;
  const thin = small ? 0.5 : 1.05;
  const dash = small ? "5 3" : undefined;
  return (
    <svg viewBox="0 0 1568 1568" preserveAspectRatio="none" fill="none" className="block h-full w-full bg-black">
      {BROWN_2.map((d) => <path key={d} d={d} stroke="#5c4108" strokeWidth={thick} strokeDasharray={dash} {...ns} />)}
      {BROWN_1.map((d) => <path key={d} d={d} stroke={small ? "#5c4108" : "#8c6408"} strokeWidth={thin} strokeDasharray={dash} {...ns} />)}
      {WHITE_2.map(([d, c]) => <path key={d} d={d} stroke={c} strokeWidth={thick} strokeDasharray={dash} {...ns} />)}
      {WHITE_1.map((d) => <path key={d} d={d} stroke="#b8b8b8" strokeWidth={thin} strokeDasharray={dash} {...ns} />)}
      <path d="M820 213L852 378M820 213L896 187 948 168M948 168L990 344M896 187L886 284" stroke="#f4f4f4" strokeWidth={small ? 0.4 : 1.3} strokeDasharray={dash} {...ns} />
      <path d="M0 953Q50 1003 100 1025L190 1065Q215 1078 260 1117L350 1193Q390 1225 435 1255 470 1277 500 1283L600 1304 660 1322Q690 1335 730 1360 790 1407 830 1424 850 1434 900 1440L980 1445Q1040 1450 1085 1466 1120 1478 1118 1502 1115 1530 1093 1568" stroke="#d0d0d0" strokeWidth={thin} strokeDasharray={dash} {...ns} />
      <path d="M1000 813L1071 803 1079 957 1103 1099M1269 1099L1568 1040" stroke="#fff" strokeWidth={thin} strokeDasharray={dash} {...ns} />
      <path d="M1347 416L1568 432V544L1341 532z" fill="#d6d6d6" stroke="#eee" strokeWidth=".8" {...ns} />
      <path d="M492 753L541 736 561 820 514 836z" fill="#d6d6d6" stroke="#fff" strokeWidth=".8" {...ns} />
      <path d="M562 874L1004 812" stroke="#fff" strokeWidth={thin} {...ns} />
      <path d="M556 772L562 767 985 692 994 697 1008 809 568 872z" fill={small ? "#f00" : "#880000"} />
      <path d="M562 778L988 703 1002 804 571 865z" fill={small ? "#f00" : "#e8605f"} />
      <path d="M562 778L988 703 1002 804 571 865z" stroke={small ? "none" : "#f08080"} strokeWidth="1" {...ns} />
      <path d="M574 788L980 713 991 797 579 852z" fill="#d6d6d6" />
      <path d="M1137 720L1148 702 1180 686 1545 695V723H1568V929H1550V953L1159 939 1166 827H1131z" fill="#ffff80" stroke="#fff" strokeWidth="1" {...ns} />
      <path d="M573 1568L540 1528Q515 1495 514 1460 515 1430 540 1403 565 1376 595 1373 625 1373 650 1389 685 1410 720 1450L765 1500 807 1568z" fill="#00ff00" stroke="#fff" strokeWidth=".8" {...ns} />
      <path d="M0 1476L45 1494 141 1568H0z" fill="#0000ff" stroke="#fff" strokeWidth=".8" {...ns} />
      <path d="M0 1515Q40 1535 62 1568H0z" fill="#fff" />
      <path d="M100 283L188 384M188 281L100 383" stroke="#980000" strokeWidth={thin} {...ns} />
      {small && <path d="M195 330h80" stroke="#ddd" strokeWidth="2.500" {...ns} />}
    </svg>
  );
}

function MapCanvas() {
  return (
    <div className="relative h-[597px] w-[685px] shrink-0 overflow-hidden border-r border-b border-l border-[#828790] bg-black">
      <div className="h-[596px] w-[684px]"><MapDrawing /></div>
      <span className="absolute top-[118px] left-[82px] font-['Open_Sans',sans-serif] text-[12px] leading-[18px] tracking-[-0.1px] text-[#222] [text-shadow:1px_0_#fff,-1px_0_#fff,0_1px_#fff,0_-1px_#fff,1px_1px_#fff,-1px_-1px_#fff,1px_-1px_#fff,-1px_1px_#fff]">268.53</span>
    </div>
  );
}

/* ---------- right dock ---------- */

const pushBtn = "flex h-[28px] shrink-0 items-center justify-center border border-[#adadad] bg-[#e1e1e1]";
const field = "flex w-[186px] border border-[#7a7a7a] bg-white";
const narrow = "inline-block origin-left scale-x-[0.845]";

function InspectionDock() {
  return (
    <div className="ml-[4px] flex flex-1 flex-col">
      <DockTitle float={false}>국토기본정보 검사</DockTitle>
      <div className="flex flex-col pr-[9px] pl-[9px]">
        <div className="mt-[11px] flex h-[24px] items-center">
          <span className="-mt-[2px] flex-1 tracking-[0.2px]">오류 리스트</span>
          <div className="-ml-px flex size-[23px] items-center justify-center border border-[#adadad] bg-[#e1e1e1]">
            <div className="bg-white"><Ico size={17}><path d="M2 22l2-7L17 2l5 5L9 20z" fill="#bbb" stroke="#333" strokeWidth="1.800" /><path d="M6 17L18 5M15 4l5 5M4 15l5 5" stroke="#333" strokeWidth="1.600" /></Ico></div>
          </div>
          <div className="mr-px ml-2 flex size-[23px] items-center justify-center border border-[#adadad] bg-[#e1e1e1]">
            <div className="bg-white"><Ico size={17}><TrashCan c="#333" /></Ico></div>
          </div>
        </div>
        <div className="mt-[7px] flex h-[145px] w-[282px] flex-col border border-[#828790] bg-white leading-[14px]">
          <div className="flex h-[14px] items-center pl-[5px]"><Chev open /><span className="ml-[8px]">건물</span></div>
          <div className="ml-[40px] flex h-[14px] items-center bg-[#cce8ff] pl-[3px]"><span className={narrow}>tn_buld_2053</span></div>
        </div>
        <div className="mt-[7px] ml-px flex w-[280px] flex-col"><div className={pushBtn}>오류 객체 선택</div></div>
        <div className="mt-[23px] flex h-[253px] w-[282px] flex-col border border-[#dcdcdc] pr-[9px] pl-[9px]">
          <div className="-mt-[11px] -ml-[3px] flex h-[20px] items-center self-start bg-[#f0f0f0] px-[3px] font-medium tracking-[0.8px] text-[#333]">오류 정보</div>
          <div className="mt-[12px] flex h-[20px] items-center justify-between"><span>객체 ID:</span><div className={field + " h-[20px] items-center pl-[3px]"}><span className={narrow}>tn_buld_2053</span></div></div>
          <div className="mt-[15px] flex h-[20px] items-center justify-between"><span>객체 속성:</span><div className={field + " h-[20px] items-center pl-[3px]"}><span className="inline-block origin-left scale-x-90">BDK005</span></div></div>
          <div className="mt-[13px] flex h-[50px] items-center justify-between pb-0"><span className="-mt-[4px]">오류 사유:</span><div className="h-[50px] w-[186px] border border-[#828790] pt-[3px] pl-[4px] text-[#787878]">분류 오류</div></div>
          <div className="mt-[10px] flex h-[86px] items-center justify-between">
            <span className="-mt-[3px] whitespace-nowrap">오류 이미지:</span>
            <div className="flex h-[86px] w-[186px] shrink-0 justify-center border border-[#828790]"><div className="flex flex-1 justify-center border border-white"><div className="-my-px h-[84px] w-[96px]"><MapDrawing small /></div></div></div>
          </div>
        </div>
        <div className="mt-[8px] ml-px flex w-[280px] flex-col gap-2">
          <div className={pushBtn}>오류 저장</div>
          <div className={pushBtn}>검사 완료</div>
        </div>
      </div>
    </div>
  );
}

/* ---------- frame ---------- */

const MENU: [string, string][] = [
  ["프로젝트(J)", "w-[79px]"], ["편집(E)", "w-[58px]"], ["보기(V)", "w-[58px]"], ["레이어(L)", "w-[69px]"], ["설정(S)", "w-[58px]"], ["플러그인(P)", "w-[82px]"], ["벡터(o)", "w-[57px]"],
  ["래스터(R)", "w-[70px]"], ["데이터베이스(D)", "w-[106px]"], ["웹(W)", "w-[48px]"], ["NGII", "w-[40px]"], ["공간처리(c)", "w-[81px]"], ["도움말(H)", "w-[70px]"],
];

function Spin() {
  return (
    <div className="m-[1px] flex w-[14px] flex-col border border-[#b0b0b0] bg-[#ececec]">
      <div className="flex flex-1 items-center justify-center border-b border-[#b0b0b0]"><svg width="5" height="3" viewBox="0 0 5 3"><path d="M0 3h5L2.500 0z" /></svg></div>
      <div className="flex flex-1 items-center justify-center"><svg width="5" height="3" viewBox="0 0 5 3"><path d="M0 0h5L2.500 3z" /></svg></div>
    </div>
  );
}

function StatusBar() {
  const box = "flex h-[20px] shrink-0 items-center border border-[#7a7a7a] bg-white";
  return (
    <div className="flex h-[27px] shrink-0 items-center pl-[485px] whitespace-nowrap">
      <span className="w-[27px]">좌표</span>
      <div className={box + " w-[150px] justify-center"}><span className="inline-block scale-x-[0.87]">1057073,4,1752533,8</span></div>
      <div className="ml-[3px]"><Ico size={16}><path d="M3 5l9 15c4 4 8 1 6-3L9 2C7 0 1 1 3 5z" fill="#ddd" stroke="#222" strokeWidth="1.500" /><path d="M3 9l8-6M20 3L5 21M22 12l-7 9" stroke="#222" strokeWidth="1.500" /></Ico></div>
      <span className="ml-[14px] w-[26px]">축척</span>
      <div className={box + " w-[87px] justify-between pr-[4px] pl-[4px]"}><span className="tracking-[-0.8px]">1:500</span><svg width="9" height="6" viewBox="0 0 9 6" fill="none"><path d="M.5 1l4 4 4-4" stroke="#555" /></svg></div>
      <div className="ml-[3px]"><Ico size={16}><path d="M6 11V7c0-8 12-8 12 0v4" stroke="#999" strokeWidth="2.400" /><rect x="3.500" y="11" width="17" height="12" rx="2" fill="#777" /></Ico></div>
      <span className="ml-[13px] w-[55px] tracking-[-0.3px]">Magnifier</span>
      <div className={box + " w-[71px] items-stretch! justify-between"}><span className="flex items-center pl-[4px] tracking-[-1px]">100%</span><Spin /></div>
      <span className="ml-[9px] w-[33px]">회전</span>
      <div className={box + " w-[71px] items-stretch! justify-between"}><span className="flex items-center pl-[4px] tracking-[-0.6px]">0,0</span><Spin /></div>
      <div className="ml-[6px]"><Check /></div>
      <span className="ml-[5px] w-[53px]">렌더링</span>
      <Ico size={16}><circle cx="12" cy="12" r="10" fill="#aaa" stroke="#777" strokeWidth="2" /><ellipse cx="12" cy="12" rx="5" ry="10" stroke="#ddd" strokeWidth="1.500" /><path d="M2 12h20M12 0v6M12 18v6" stroke="#777" strokeWidth="2" /></Ico>
      <span className="ml-[4px] w-[82px] tracking-[-0.35px]">EPSG:5179</span>
      <Ico size={16}><path d="M12 3c7 0 11 4 11 8.500S19 19 18 19l1 5-6-4C6 20 1 17 1 11.500S5 3 12 3z" fill="#555" /><g fill="#fff"><circle cx="7" cy="11.500" r="1.600" /><circle cx="12" cy="11.500" r="1.600" /><circle cx="17" cy="11.500" r="1.600" /></g></Ico>
    </div>
  );
}

export default function App() {
  return (
    <div className="flex h-[768px] w-[1288px] flex-col overflow-hidden bg-[#f0f0f0] font-['Noto_Sans_CJK_KR',sans-serif] text-[13px] leading-[18px] text-black">
      <div className="flex h-[21px] shrink-0 items-center bg-white pl-[3px]">
        <Ico size={16}><circle cx="11" cy="13" r="9" fill="#e4ec9a" stroke="#b8c860" strokeWidth="2" /><circle cx="11" cy="13" r="4" fill="#fff" /><path d="M9 16C12 9 15 4 22 1c0 4-2 6-4 8l-6 7zM15 16l5 6" fill="#2e8a3a" stroke="#1f7030" /></Ico>
        <span className="mt-[2px] ml-[4px] flex-1 font-['Open_Sans',sans-serif] text-[12px] tracking-[-0.1px]">QGIS2.18.17</span>
        <svg width="12" height="12" viewBox="0 0 12 12" fill="none" className="mr-[34px]"><path d="M1 6.500h10" stroke="#000" /></svg>
        <svg width="12" height="12" viewBox="0 0 12 12" fill="none" className="mr-[34px]"><path d="M1.500 3.500h7v7h-7zM3.500 3.500v-2h7v7h-2" stroke="#000" /></svg>
        <svg width="12" height="12" viewBox="0 0 12 12" fill="none" className="mr-[19px]"><path d="M1 1l10 10M11 1L1 11" stroke="#000" /></svg>
      </div>
      <div className="flex h-[20px] shrink-0 items-center bg-white pb-[2px] pl-[9px] whitespace-nowrap">
        {MENU.map(([m, w]) => <span key={m} className={w}>{m}</span>)}
      </div>
      <div className="flex h-[103px] shrink-0 flex-col"><RowOne /><RowTwo /><RowThree /></div>
      <div className="flex min-h-0 flex-1">
        <SideBar />
        <div className="mr-[4px] flex w-[248px] shrink-0 flex-col"><BrowserPanel /><LayersPanel /></div>
        <MapCanvas />
        <InspectionDock />
      </div>
      <StatusBar />
    </div>
  );
}
